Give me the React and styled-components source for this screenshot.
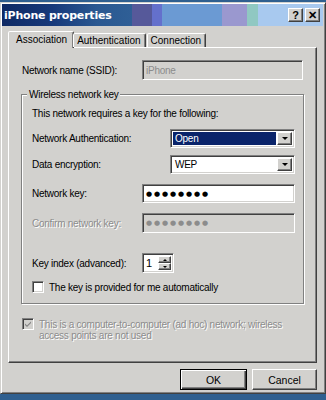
import React from "react";
import styled, { createGlobalStyle, css } from "styled-components";

const Global = createGlobalStyle`
  html, body { margin: 0; padding: 0; }
  body {
    background: #3a6388;
    font-family: "Liberation Sans", Arial, sans-serif;
    font-size: 10px;
    letter-spacing: -0.25px;
    color: #000;
  }
  * { box-sizing: border-box; }
`;

const FACE = "#d2d1ce";

const Desktop = styled.div`
  width: 326px;
  height: 400px;
  padding-top: 2px;
  background: #2f5f8f;
  overflow: hidden;
`;

const Window = styled.div`
  width: 326px;
  height: 392px;
  background: ${FACE};
  border: 1px solid;
  border-color: ${FACE} #404040 #404040 ${FACE};
  box-shadow: inset 1px 1px 0 #fff, inset -1px -1px 0 #808080;
  padding: 1px 2px 1px 1px;
  display: flex;
  flex-direction: column;
`;

const TitleBar = styled.div`
  height: 22px;
  display: flex;
  align-items: center;
  padding: 0 3px 0 2px;
  background: linear-gradient(
    90deg,
    #0f2a64 0px,
    #17397a 50px,
    #2a5891 95px,
    #2f5f96 130px,
    #56599a 130px,
    #56599a 150px,
    #6470cc 150px,
    #6470cc 160px,
    #6b9ad3 160px,
    #6b9ad3 220px,
    #9a98cf 220px,
    #9a98cf 245px,
    #90c8c2 245px,
    #90c8c2 256px,
    #a8c9ef 256px
  );
`;

const Title = styled.div`
  flex: 1;
  color: #fff;
  font-family: Tahoma, "DejaVu Sans", "Liberation Sans", sans-serif;
  font-weight: bold;
  font-size: 11px;
  letter-spacing: -0.2px;
`;

const bevelOut = css`
  background: ${FACE};
  border: 1px solid;
  border-color: #fff #404040 #404040 #fff;
  box-shadow: inset -1px -1px 0 #808080;
`;

const CaptionButton = styled.div`
  ${bevelOut};
  width: 15px;
  height: 14px;
  margin-left: ${(p) => (p.$gap ? "2px" : "0")};
  display: flex;
  align-items: center;
  justify-content: center;
  font-family: "Liberation Sans", Arial, sans-serif;
  font-weight: bold;
  font-size: 11px;
  letter-spacing: 0;
  line-height: 1;
  color: #000;
`;

const TabRow = styled.div`
  display: flex;
  align-items: flex-end;
  height: 21px;
  padding-left: 6px;
  position: relative;
  z-index: 1;
`;

const Tab = styled.div`
  height: ${(p) => (p.$active ? "17px" : "14px")};
  padding: ${(p) => (p.$active ? "0 6px 1px 7px" : "0 4px 0 3px")};
  margin: ${(p) => (p.$active ? "0 -1px -1px 0" : "0 1px 0 0")};
  background: ${FACE};
  border: 1px solid;
  border-bottom: none;
  border-color: #fff #404040 transparent #fff;
  box-shadow: inset -1px 0 0 #808080;
  border-radius: 2px 2px 0 0;
  display: flex;
  align-items: center;
  font-size: 10px;
  letter-spacing: 0;
  white-space: nowrap;
`;

const Panel = styled.div`
  margin-left: 6px;
  width: 309px;
  height: 316px;
  border: 1px solid;
  border-color: #fff #404040 #404040 #fff;
  box-shadow: inset -1px -1px 0 #808080;
  padding: 12px 12px 0 12px;
  display: flex;
  flex-direction: column;
`;

const Row = styled.div`
  display: flex;
  align-items: center;
  height: ${(p) => p.$h || 19}px;
  margin-top: ${(p) => p.$mt || 0}px;
  padding-left: ${(p) => p.$pl || 0}px;
`;

const Label = styled.div`
  width: ${(p) => p.$w}px;
  flex: none;
  white-space: nowrap;
  color: ${(p) => (p.$disabled ? "#8c8c8c" : "#000")};
  text-shadow: ${(p) => (p.$disabled ? "1px 1px 0 #fff" : "none")};
`;

const sunken = css`
  border: 1px solid;
  border-color: #808080 #fff #fff #808080;
  box-shadow: inset 1px 1px 0 #404040, inset -1px -1px 0 ${FACE};
`;

const TextBox = styled.div`
  ${sunken};
  width: ${(p) => p.$w}px;
  height: ${(p) => p.$h || 19}px;
  background: ${(p) => (p.$disabled ? FACE : "#fff")};
  color: ${(p) => (p.$disabled ? "#8c8c8c" : "#000")};
  display: flex;
  align-items: center;
  padding-left: 3px;
  white-space: nowrap;
`;

const Dots = styled.span`
  font-family: "DejaVu Sans", sans-serif;
  font-size: 7px;
  letter-spacing: 1.9px;
  color: ${(p) => (p.$disabled ? "#8c8c8c" : "#000")};
`;

const Select = styled.div`
  ${sunken};
  width: 125px;
  height: 19px;
  background: #fff;
  display: flex;
  padding: 2px;
`;

const SelectValue = styled.div`
  flex: 1;
  display: flex;
  align-items: center;
  padding-left: 2px;
  margin-right: 1px;
  background: ${(p) => (p.$selected ? "#0a246a" : "#fff")};
  color: ${(p) => (p.$selected ? "#fff" : "#000")};
`;

const DropButton = styled.div`
  ${bevelOut};
  width: 15px;
  display: flex;
  align-items: center;
  justify-content: center;
`;

const Arrow = styled.div`
  width: 0;
  height: 0;
  border-left: ${(p) => p.$s || 3}px solid transparent;
  border-right: ${(p) => p.$s || 3}px solid transparent;
  border-top: ${(p) => p.$s || 3}px solid #000;
  transform: ${(p) => (p.$up ? "rotate(180deg)" : "none")};
`;

const Group = styled.div`
  position: relative;
  width: 283px;
  height: 210px;
  margin-top: 14px;
  border: 1px solid #808080;
  box-shadow: inset 1px 1px 0 #fff, 1px 1px 0 #fff;
  padding: 0 0 0 10px;
  display: flex;
  flex-direction: column;
`;

const Legend = styled.div`
  position: absolute;
  top: -7px;
  left: 5px;
  padding: 0 2px;
  background: ${FACE};
  line-height: 13px;
`;

const Spin = styled.div`
  ${sunken};
  width: 32px;
  height: 20px;
  background: #fff;
  display: flex;
  padding: 2px;
`;

const SpinValue = styled.div`
  flex: 1;
  display: flex;
  align-items: center;
  padding-left: 1px;
  font-size: 11px;
`;

const SpinButtons = styled.div`
  width: 13px;
  display: flex;
  flex-direction: column;
`;

const SpinButton = styled.div`
  ${bevelOut};
  flex: 1;
  display: flex;
  align-items: center;
  justify-content: center;
`;

const Check = styled.div`
  ${sunken};
  width: 12px;
  height: 12px;
  flex: none;
  background: ${(p) => (p.$disabled ? FACE : "#fff")};
  display: flex;
  align-items: center;
  justify-content: center;
`;

const CheckRow = styled.div`
  display: flex;
  align-items: flex-start;
  gap: ${(p) => p.$gap}px;
  margin-top: ${(p) => p.$mt}px;
  padding-left: ${(p) => p.$pl || 0}px;
`;

const CheckText = styled.div`
  line-height: 11px;
  padding-top: ${(p) => p.$pt || 0}px;
  color: ${(p) => (p.$disabled ? "#8c8c8c" : "#000")};
  text-shadow: ${(p) => (p.$disabled ? "1px 1px 0 #fff" : "none")};
`;

const Footer = styled.div`
  display: flex;
  justify-content: flex-end;
  gap: 5px;
  margin-top: 6px;
  padding-right: 6px;
`;

const Button = styled.div`
  width: ${(p) => (p.$default ? 67 : 65)}px;
  height: 21px;
  background: ${FACE};
  border: 1px solid;
  border-color: ${(p) => (p.$default ? "#000" : "#fff #404040 #404040 #fff")};
  box-shadow: ${(p) =>
    p.$default
      ? "inset 1px 1px 0 #fff, inset -1px -1px 0 #404040, inset -2px -2px 0 #808080"
      : "inset -1px -1px 0 #808080"};
  display: flex;
  align-items: center;
  justify-content: center;
  font-size: 10.5px;
  letter-spacing: 0;
`;

const CheckMark = ({ color }) => (
  <svg width="8" height="8" viewBox="0 0 8 8">
    <path d="M1 3.5 L3 5.5 L7 1.5 L7 3 L3 7 L1 5 Z" fill={color} />
  </svg>
);

export default function App() {
  return (
    <>
      <Global />
      <Desktop>
        <Window>
          <TitleBar>
            <Title>iPhone properties</Title>
            <CaptionButton>?</CaptionButton>
            <CaptionButton $gap>✕</CaptionButton>
          </TitleBar>
          <TabRow>
            <Tab $active>Association</Tab>
            <Tab>Authentication</Tab>
            <Tab>Connection</Tab>
          </TabRow>
          <Panel>
            <Row $h={20} $pl={1}>
              <Label $w={120}>Network name (SSID):</Label>
              <TextBox $w={161} $h={20} $disabled>
                iPhone
              </TextBox>
            </Row>
            <Group>
              <Legend>Wireless network key</Legend>
              <Row $h={14} $mt={11}>
                <Label>This network requires a key for the following:</Label>
              </Row>
              <Row $mt={9}>
                <Label $w={138}>Network Authentication:</Label>
                <Select>
                  <SelectValue $selected>Open</SelectValue>
                  <DropButton>
                    <Arrow />
                  </DropButton>
                </Select>
              </Row>
              <Row $mt={7}>
                <Label $w={138}>Data encryption:</Label>
                <Select>
                  <SelectValue>WEP</SelectValue>
                  <DropButton>
                    <Arrow />
                  </DropButton>
                </Select>
              </Row>
              <Row $mt={10}>
                <Label $w={110}>Network key:</Label>
                <TextBox $w={153}>
                  <Dots>●●●●●●●●</Dots>
                </TextBox>
              </Row>
              <Row $mt={10} $h={20}>
                <Label $w={110} $disabled>
                  Confirm network key:
                </Label>
                <TextBox $w={153} $h={20} $disabled>
                  <Dots $disabled>●●●●●●●●</Dots>
                </TextBox>
              </Row>
              <Row $mt={20} $h={20}>
                <Label $w={110}>Key index (advanced):</Label>
                <Spin>
                  <SpinValue>1</SpinValue>
                  <SpinButtons>
                    <SpinButton>
                      <Arrow $s={2} $up />
                    </SpinButton>
                    <SpinButton>
                      <Arrow $s={2} />
                    </SpinButton>
                  </SpinButtons>
                </Spin>
              </Row>
              <CheckRow $gap={5} $mt={8}>
                <Check />
                <CheckText $pt={1}>The key is provided for me automatically</CheckText>
              </CheckRow>
            </Group>
            <CheckRow $gap={5} $mt={14} $pl={1}>
              <Check $disabled>
                <CheckMark color="#808080" />
              </Check>
              <CheckText $disabled $pt={1}>
                This is a computer-to-computer (ad hoc) network; wireless
                <br />
                access points are not used
              </CheckText>
            </CheckRow>
          </Panel>
          <Footer>
            <Button $default>OK</Button>
            <Button>Cancel</Button>
          </Footer>
        </Window>
      </Desktop>
    </>
  );
}
